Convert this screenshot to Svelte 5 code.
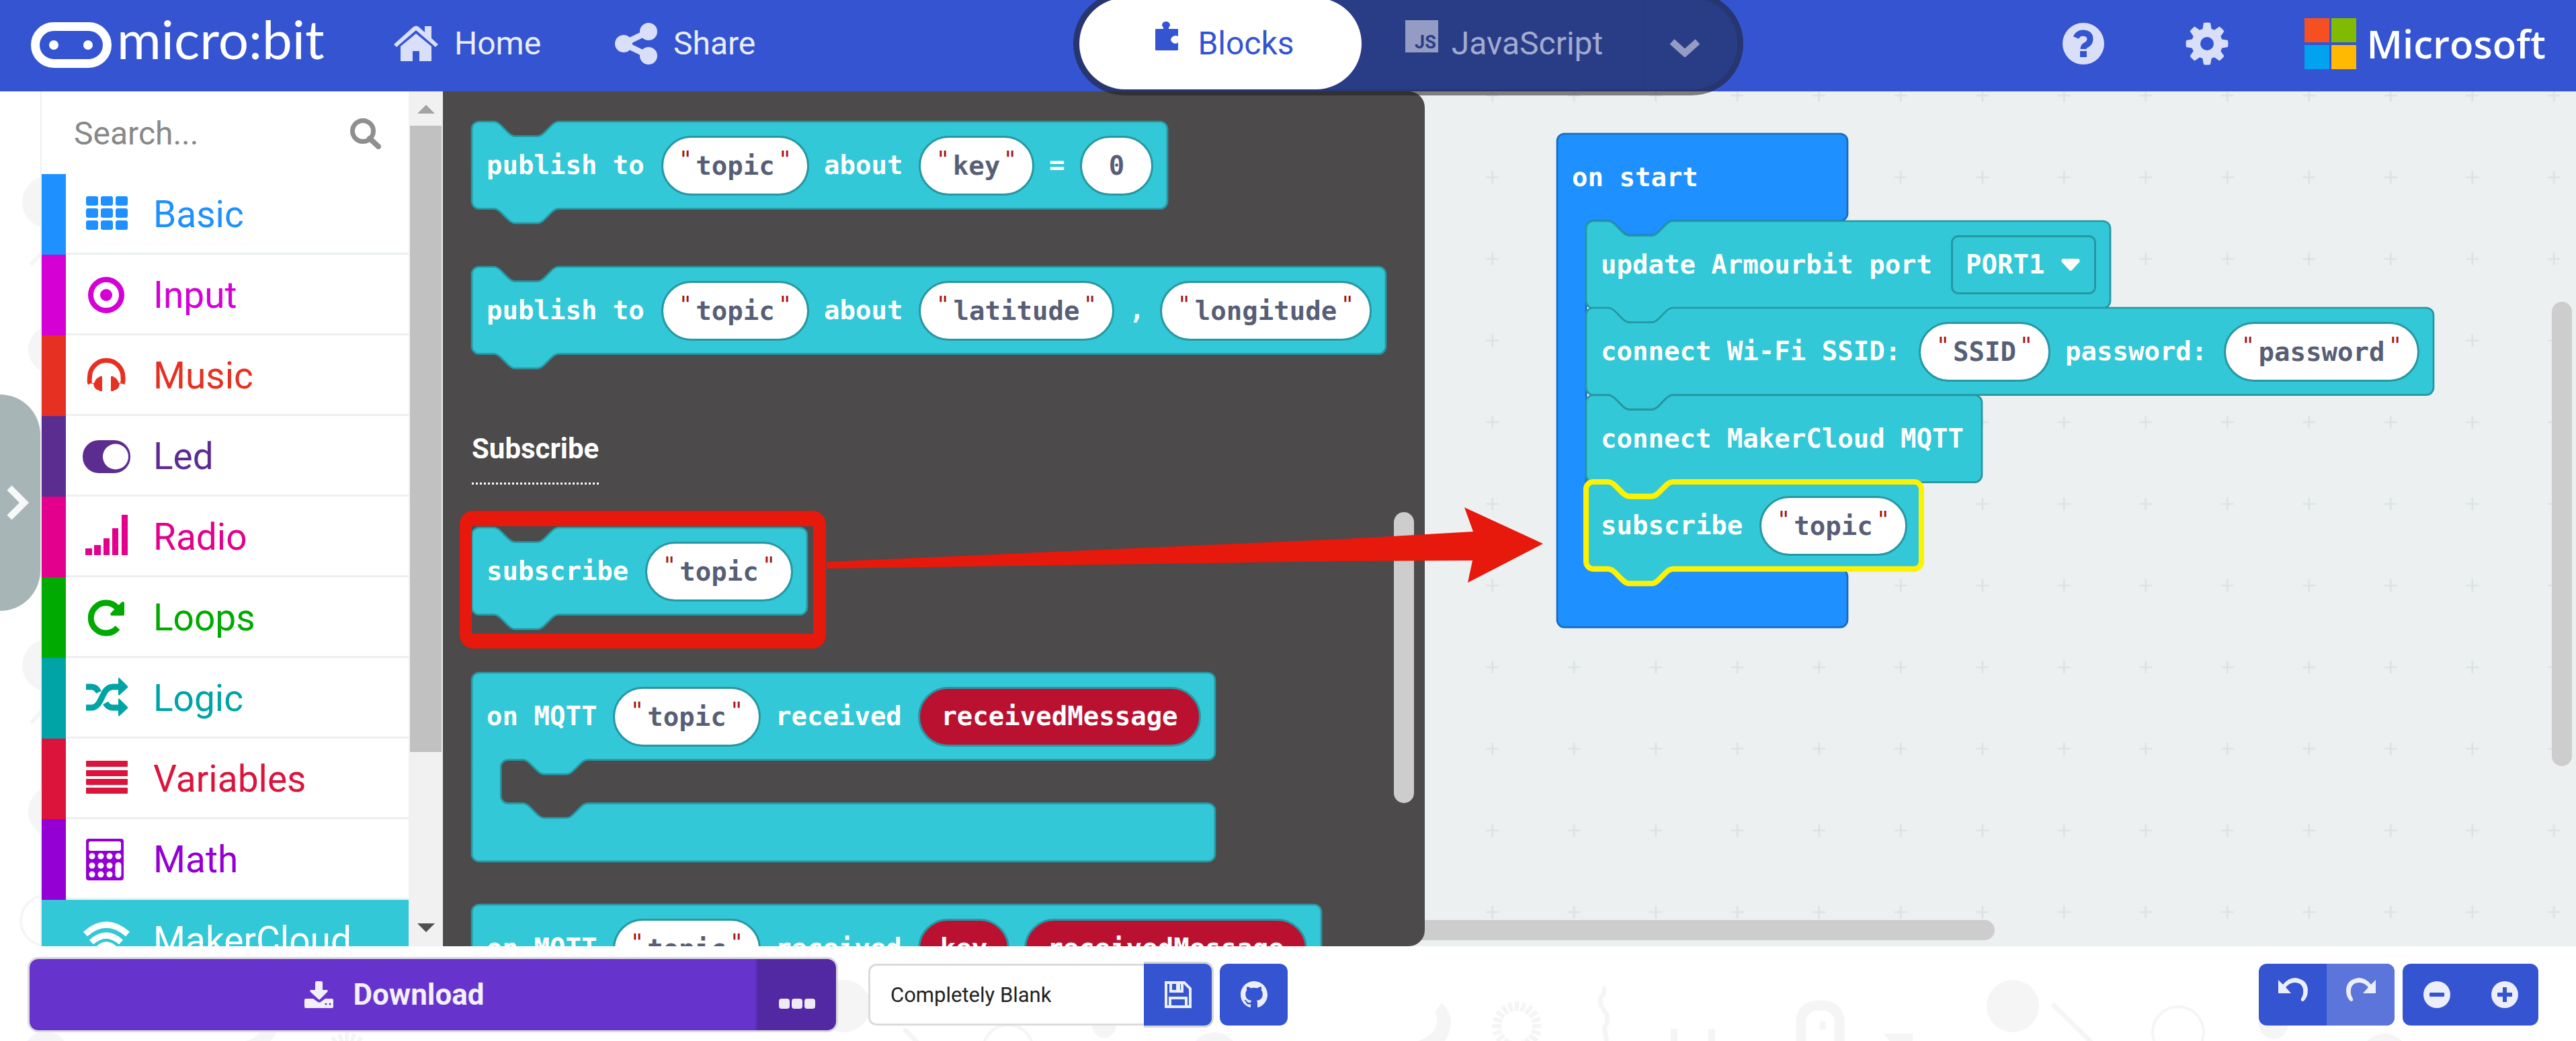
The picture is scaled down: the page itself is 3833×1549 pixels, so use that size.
<script>
  const CH = 23.75;
  const U = 2.7;

  const partWidth = (p) => {
    const n = p.v.length * CH;
    if (p.k === 'text') return Math.round(n);
    if (p.k === 'str') return Math.round(n + 101);
    if (p.k === 'var') return Math.round(n + 65);
    if (p.k === 'num') return 109;
    return Math.round(n + 97);
  };
  const rowWidth = (parts) => parts.reduce((w, p) => w + partWidth(p) + 22, 21);

  const NOTCH = 'c2,0 3,1 4,2 l4,4 c1,1 2,2 4,2 h12 c2,0 3,-1 4,-2 l4,-4 c1,-1 2,-2 4,-2';
  const NOTCH_BACK = 'c-2,0 -3,1 -4,2 l-4,4 c-1,1 -2,2 -4,2 h-12 c-2,0 -3,-1 -4,-2 l-4,-4 c-1,-1 -2,-2 -4,-2';

  function shape(kind, px, inner = 24) {
    const w = px / U;
    if (kind === 'stmt') {
      return `M0,4 a4,4 0 0 1 4,-4 h8 ${NOTCH} H${w - 4} a4,4 0 0 1 4,4 v40 a4,4 0 0 1 -4,4 H48 ${NOTCH_BACK} H4 a4,4 0 0 1 -4,-4 z`;
    }
    const b = 48 + inner;
    return `M0,4 a4,4 0 0 1 4,-4 H${w - 4} a4,4 0 0 1 4,4 v40 a4,4 0 0 1 -4,4 H64 ${NOTCH_BACK} H20 a4,4 0 0 0 -4,4 V${b - 4} a4,4 0 0 0 4,4 h8 ${NOTCH} H${w - 4} a4,4 0 0 1 4,4 v24 a4,4 0 0 1 -4,4 H4 a4,4 0 0 1 -4,-4 z`;
  }

  const T = (v) => ({ k: 'text', v });
  const S = (v) => ({ k: 'str', v });
  const V = (v) => ({ k: 'var', v });

  const publish = [
    { kind: 'stmt', parts: [T('publish to'), S('topic'), T('about'), S('key'), T('='), { k: 'num', v: '0' }] },
    { kind: 'stmt', parts: [T('publish to'), S('topic'), T('about'), S('latitude'), T(','), S('longitude')] }
  ];
  const subscribe = [
    { kind: 'stmt', marked: true, parts: [T('subscribe'), S('topic')] },
    { kind: 'event', parts: [T('on MQTT'), S('topic'), T('received'), V('receivedMessage')] },
    { kind: 'event', parts: [T('on MQTT'), S('topic'), T('received'), V('key'), V('receivedMessage')] }
  ];
  const placed = [
    { kind: 'event', tone: 'blue', x: 1658, y: 63, inner: 192, width: 432, parts: [T('on start')] },
    { kind: 'stmt', x: 1701, y: 193, parts: [T('update Armourbit port'), { k: 'menu', v: 'PORT1' }] },
    { kind: 'stmt', x: 1701, y: 322, parts: [T('connect Wi-Fi SSID:'), S('SSID'), T('password:'), S('password')] },
    { kind: 'stmt', x: 1701, y: 452, parts: [T('connect MakerCloud MQTT')] },
    { kind: 'stmt', tone: 'picked', x: 1701, y: 581, parts: [T('subscribe'), S('topic')] }
  ];

  const categories = [
    { id: 'basic', name: 'Basic' },
    { id: 'input', name: 'Input' },
    { id: 'music', name: 'Music' },
    { id: 'led', name: 'Led' },
    { id: 'radio', name: 'Radio' },
    { id: 'loops', name: 'Loops' },
    { id: 'logic', name: 'Logic' },
    { id: 'variables', name: 'Variables' },
    { id: 'math', name: 'Math' },
    { id: 'maker', name: 'MakerCloud' }
  ];
  const rays = Array.from({ length: 20 }, (_, i) => i * 18);
</script>

{#snippet categoryIcon(id)}
  <svg class="cat-icon" viewBox="0 0 64 64" aria-hidden="true">
    {#if id === 'basic'}
      {#each [6, 24, 42] as y}
        {#each [2, 24, 46] as x}
          <rect {x} {y} width="18" height="14" rx="3" />
        {/each}
      {/each}
    {:else if id === 'input'}
      <circle cx="32" cy="33" r="23" fill="none" stroke="currentColor" stroke-width="8" />
      <circle cx="32" cy="33" r="9" />
    {:else if id === 'music'}
      <path d="M8 45 C6 41 7.500 38 7.500 35 A24.500 24.500 0 0 1 57 35 C57 38 58 41 56 45" fill="none" stroke="currentColor" stroke-width="7" />
      <path d="M5 45 l9 -1 q3 -8 8 -9 v-1 h4 v22 h-4 v-1 q-8 -1 -9 -10 z M60 45 l-9 -1 q-3 -8 -8 -9 v-1 h-4 v22 h4 v-1 q8 -1 9 -10 z" />
    {:else if id === 'led'}
      <rect x="-3" y="9" width="71" height="49" rx="24" />
      <circle cx="46" cy="33.500" r="19" fill="#fff" />
    {:else if id === 'radio'}
      <path d="M1 50h10v10H1z M14 45h10v15H14z M28 35h9v25h-9z M41 20h9v40h-9z M55 0h9v60h-9z" />
    {:else if id === 'loops'}
      <path d="M49 48 A22.500 22.500 0 1 1 48 18" fill="none" stroke="currentColor" stroke-width="9" />
      <path d="M59 11 v17 q0 2 -2 2 h-17 q-3 -1 -1 -4 l16 -16 q3 -2 4 1 z" />
    {:else if id === 'logic'}
      <path d="M2 16 h8 q7 0 11 8 M2 47 h8 q8 0 13 -10 l6 -12 q5 -9 13 -9 h10 M31 40 q4 7 11 7 h10" fill="none" stroke="currentColor" stroke-width="9" />
      <path d="M50 3 q1 -1 2 0 l12 12 v2 l-12 11 q-1 1 -2 0 z M50 34 q1 -1 2 0 l12 12 v2 l-12 11 q-1 1 -2 0 z" />
    {:else if id === 'variables'}
      <path d="M3 6h60q1 0 1 1v7q0 1-1 1H3q-1 0-1-1V7q0-1 1-1z M3 20h60q1 0 1 1v7q0 1-1 1H3q-1 0-1-1v-7q0-1 1-1z M3 33h60q1 0 1 1v7q0 1-1 1H3q-1 0-1-1v-7q0-1 1-1z M3 46h60q1 0 1 1v7q0 1-1 1H3q-1 0-1-1v-7q0-1 1-1z" />
    {:else if id === 'math'}
      <rect x="2" y="2" width="56" height="62" rx="4" />
      <g fill="#fff">
        <rect x="6" y="6" width="48" height="14" rx="3" />
        {#each [28, 42, 55] as cy}
          {#each [11, 24, 37] as cx}
            <circle {cx} {cy} r="4.500" />
          {/each}
        {/each}
        <circle cx="50" cy="28" r="4.500" />
        <rect x="45.500" y="37" width="9" height="23" rx="4.500" />
      </g>
    {:else}
      <g fill="none" stroke="currentColor" stroke-width="9">
        <path d="M1 24 Q32 -4 64 24" />
        <path d="M10 36 Q32 16 54 36" />
        <path d="M20 46 Q32 34 45 46" />
      </g>
    {/if}
  </svg>
{/snippet}

{#snippet block(b)}
  {@const w = b.width ?? rowWidth(b.parts)}
  <svg class="shape {b.tone ?? ''}" aria-hidden="true">
    <g transform="scale({U})"><path d={shape(b.kind, w, b.inner)} /></g>
  </svg>
  <div class="row">
    {#each b.parts as p}
      {#if p.k === 'text'}
        <span class="label" style="width:{partWidth(p)}px">{p.v}</span>
      {:else if p.k === 'str'}
        <label class="pill" style="width:{partWidth(p)}px">
          <span class="quote">"</span>
          <input value={p.v} aria-label={p.v} />
          <span class="quote">"</span>
        </label>
      {:else if p.k === 'num'}
        <label class="pill num" style="width:{partWidth(p)}px"><input value={p.v} aria-label="value" /></label>
      {:else if p.k === 'var'}
        <span class="pill var" style="width:{partWidth(p)}px">{p.v}</span>
      {:else}
        <label class="menu" style="width:{partWidth(p)}px">
          <select aria-label="Armourbit port"><option>{p.v}</option></select>
          <svg viewBox="0 0 30 20" aria-hidden="true"><path d="M4 1 H26 Q30 2 28 6 L17 18 Q15 20 13 18 L2 6 Q0 2 4 1z" fill="#fff" /></svg>
        </label>
      {/if}
    {/each}
  </div>
{/snippet}

<div class="app">
  <header>
    <a class="brand" href="#home" aria-label="micro:bit">
      <svg viewBox="0 0 120 68" aria-hidden="true">
        <rect x="6.500" y="6.500" width="107" height="55" rx="27.500" fill="none" stroke="#fff" stroke-width="13" />
        <circle cx="34" cy="34" r="7" fill="#fff" /><circle cx="85" cy="34" r="7" fill="#fff" />
      </svg>
      <span>micro:bit</span>
    </a>
    <a class="nav home" href="#projects">
      <svg viewBox="0 0 66 54" aria-hidden="true">
        <path d="M0 28 L29 2 Q33 -1 37 2 L46 10 V1 H56 V19 L66 28 L62 32 L33 7 L4 32z" />
        <path d="M10 31 L33 12 L56 31 V53 H38 V38 H28 V53 H10z" />
      </svg>
      Home
    </a>
    <a class="nav share" href="#share">
      <svg viewBox="0 0 64 64" aria-hidden="true">
        <circle cx="13" cy="32" r="13" /><circle cx="50" cy="14" r="13" /><circle cx="50" cy="50" r="13" />
        <path d="M50 14 L13 32 L50 50" fill="none" stroke="currentColor" stroke-width="9" />
      </svg>
      Share
    </a>
    <div class="toggle">
      <button class="mode on">
        <svg class="puzzle" viewBox="0 0 36 44" aria-hidden="true">
          <path d="M3 11 H13 V9 Q11 7 11 5 Q12 0 17 0 Q22 0 23 5 Q23 7 21 9 V11 H34 Q35 11 35 12 V22 Q33 21 31 21 Q25 22 24 27 Q25 32 31 33 Q33 33 35 31 V42 Q35 43 34 43 H2 Q1 43 1 42 V12 Q1 11 3 11z" />
        </svg>
        Blocks
      </button>
      <button class="mode js">
        <span class="js-badge">JS</span>
        JavaScript
      </button>
      <button class="mode more" aria-label="Languages">
        <svg viewBox="0 0 46 28" aria-hidden="true"><path d="M4 5 L23 22 L42 5" fill="none" stroke="currentColor" stroke-width="10" /></svg>
      </button>
    </div>
    <div class="tools">
      <button class="tool" aria-label="Help">
        <svg viewBox="0 0 62 62" aria-hidden="true">
          <circle cx="31" cy="31" r="31" />
          <path d="M20 22 Q23 15 31 15 Q41 16 41 24 Q41 30 35 33 Q31 35 31 39" fill="none" stroke="#3454d1" stroke-width="9" />
          <rect x="26" y="42" width="10" height="9" fill="#3454d1" />
        </svg>
      </button>
      <button class="tool gear" aria-label="Settings">
        <svg viewBox="0 0 64 64" aria-hidden="true">
          <g>
            {#each [0, 45, 90, 135, 180, 225, 270, 315] as a}
              <path d="M25 12 L27 1 Q32 0 37 1 L39 12z" transform="rotate({a} 32 32)" />
            {/each}
          </g>
          <circle cx="32" cy="32" r="16.500" fill="none" stroke="currentColor" stroke-width="13" />
        </svg>
      </button>
      <a class="ms" href="#microsoft">
        <svg viewBox="0 0 77 77" aria-hidden="true">
          <rect width="37" height="36" fill="#f65022" /><rect x="40" width="37" height="36" fill="#80bb02" />
          <rect y="40" width="37" height="36" fill="#02a3ee" /><rect x="40" y="40" width="37" height="36" fill="#ffb903" />
        </svg>
        Microsoft
      </a>
    </div>
  </header>

  <main>
    <aside>
      <svg class="doodle" viewBox="0 0 60 1272" aria-hidden="true">
        <g fill="#f5f5f5"><circle cx="72" cy="165" r="39" /><circle cx="78" cy="384" r="36" /><circle cx="72" cy="854" r="39" /><circle cx="81" cy="1072" r="39" /></g>
        <g fill="none" stroke="#f5f5f5" stroke-width="4"><path d="M46 258 L62 240 M46 940 L62 922" stroke-width="6" /><circle cx="68" cy="1234" r="37" /></g>
      </svg>
      <button class="expand" aria-label="Show simulator">
        <svg viewBox="0 0 34 52" aria-hidden="true"><path d="M4 4 L26 26 L4 48" fill="none" stroke="#f7f9f9" stroke-width="10" /></svg>
      </button>
    </aside>

    <nav class="toolbox">
      <div class="list">
        <div class="search">
          <input type="text" placeholder="Search..." aria-label="Search" />
          <svg viewBox="0 0 46 46" aria-hidden="true"><circle cx="19" cy="19" r="15.500" fill="none" stroke="#8f8f8f" stroke-width="7" /><path d="M29 30 L42 42" stroke="#8f8f8f" stroke-width="8" stroke-linecap="round" /></svg>
        </div>
        {#each categories as c}
          <button class="cat {c.id}">{@render categoryIcon(c.id)}<span>{c.name}</span></button>
        {/each}
      </div>
      <div class="bar" aria-hidden="true">
        <svg viewBox="0 0 26 14"><path d="M0 13 L13 0 L26 13z" fill="#a3a3a3" /></svg>
        <div class="thumb"></div>
        <svg viewBox="0 0 26 14"><path d="M0 0 L13 13 L26 0z" fill="#505050" /></svg>
      </div>
    </nav>

    <section class="workspace">
      <svg class="grid" aria-hidden="true">
        <defs>
          <pattern id="cross" width="45" height="45" patternUnits="userSpaceOnUse" patternTransform="translate(43 67) scale({U})">
            <path d="M22.500 19 v7 M19 22.500 h7" stroke="#dce1e2" stroke-width="1" />
          </pattern>
        </defs>
        <rect width="100%" height="100%" fill="url(#cross)" />
      </svg>
      <div class="scroll-x"></div>
      <div class="scroll-y"></div>
      {#each placed as b}
        <div class="block placed" style="left:{b.x}px;top:{b.y}px;width:{b.width ?? rowWidth(b.parts)}px">
          {@render block(b)}
        </div>
      {/each}

      <div class="flyout">
        {#each publish as b}
          <div class="block {b.kind}" style="width:{rowWidth(b.parts)}px">{@render block(b)}</div>
        {/each}
        <h2>Subscribe</h2>
        {#each subscribe as b}
          <div class="block {b.kind}" style="width:{rowWidth(b.parts)}px">
            {@render block(b)}
            {#if b.marked}<div class="mark"></div>{/if}
          </div>
        {/each}
        <div class="fly-scroll"></div>
      </div>

      <svg class="arrow" viewBox="0 0 1066 114" aria-hidden="true">
        <path d="M0 82 L770 48 L962 37 L949 1 L1066 55 L954 113 L961 80 L770 81 L0 92z" fill="#e6190c" />
      </svg>
    </section>
  </main>

  <footer>
    <svg class="doodle" viewBox="0 0 3833 141" preserveAspectRatio="xMinYMin slice" aria-hidden="true">
      <g fill="#f5f5f5">
        <circle cx="68" cy="158" r="32" /><path d="M366 141 Q385 136 392 120 H416 Q410 132 402 141z" />
        <circle cx="1256" cy="89" r="39" /><circle cx="1643" cy="118" r="18" /><circle cx="1807" cy="164" r="36" />
        <path d="M2145 84 Q2170 108 2150 141 H2110 Q2146 128 2136 98z" />
        <circle cx="2995" cy="89" r="39" /><path d="M2802 130 H2846 V141 H2812z" />
        <circle cx="3383" cy="116" r="22" /><circle cx="3548" cy="166" r="36" />
      </g>
      <g fill="none" stroke="#f5f5f5" stroke-width="4">
        <path d="M1345 123 L1368 146 M3054 86 L3112 143" stroke-width="7" />
        <circle cx="1500" cy="154" r="37" /><circle cx="3241" cy="128" r="38" />
        <path d="M2387 60 v10 q-12 10 0 26 q10 12 0 26 l4 19" stroke-width="7" />
        <path d="M2491 123 v20 M2547 123 v20" stroke-width="10" />
        <path d="M2680 143 V108 Q2684 88 2708 88 Q2733 88 2737 108 V143" stroke-width="15" />
        <path d="M2712 112 V124" stroke-width="9" />
        {#each rays as a}
          <path d="M2257 82 v14" stroke-width="6" transform="rotate({a} 2257 119)" />
          <path d="M516 128 v14" stroke-width="6" transform="rotate({a} 516 165)" />
        {/each}
      </g>
    </svg>
    <div class="download">
      <button class="dl-main">
        <svg viewBox="0 0 44 40" aria-hidden="true">
          <path d="M18 0 h7 q2 0 2 2 v11 h6 q3 0 1 3 L23 27 q-1 1 -2 0 L9 16 q-2 -3 1 -3 h6 V2 q0 -2 2 -2z" />
          <path d="M2 26 H13 L20 31 Q22 32 24 31 L31 26 H41 Q43 26 43 28 V38 Q43 40 41 40 H2 Q0 40 0 38 V28 Q0 26 2 26z" />
          <circle cx="32" cy="34" r="1.500" fill="#6633cc" /><circle cx="38" cy="34" r="1.500" fill="#6633cc" />
        </svg>
        Download
      </button>
      <button class="dl-more" aria-label="More download options"><i></i><i></i><i></i></button>
    </div>
    <div class="project">
      <input value="Completely Blank" aria-label="Project name" />
      <button class="save" aria-label="Save">
        <svg viewBox="0 0 40 40" aria-hidden="true">
          <path d="M2 2 H29 L38 11 V38 H2z M8 38 V25 H32 V38 M9 2 V15 H26 V2" fill="none" stroke="currentColor" stroke-width="4" />
          <rect x="17" y="4" width="6" height="9" />
        </svg>
      </button>
    </div>
    <button class="github" aria-label="GitHub">
      <svg viewBox="0 0 16 16" aria-hidden="true"><path d="M8 0C3.58 0 0 3.58 0 8c0 3.54 2.29 6.53 5.47 7.59.4.07.55-.17.55-.38 0-.19-.01-.82-.01-1.49-2.01.37-2.53-.49-2.69-.94-.09-.23-.48-.94-.82-1.13-.28-.15-.68-.52-.01-.53.63-.01 1.08.58 1.23.82.72 1.21 1.87.87 2.33.66.07-.52.28-.87.51-1.07-1.78-.2-3.64-.89-3.64-3.95 0-.87.31-1.59.82-2.15-.08-.2-.36-1.02.08-2.12 0 0 .67-.21 2.2.82.64-.18 1.32-.27 2-.27s1.36.09 2 .27c1.53-1.04 2.2-.82 2.2-.82.44 1.1.16 1.92.08 2.12.51.56.82 1.27.82 2.15 0 3.07-1.87 3.75-3.65 3.95.29.25.54.73.54 1.48 0 1.07-.01 1.93-.01 2.2 0 .21.15.46.55.38A8.01 8.01 0 0 0 16 8c0-4.42-3.58-8-8-8z" /></svg>
    </button>
    <div class="pair history">
      <button aria-label="Undo">
        <svg viewBox="0 0 46 36" aria-hidden="true"><path d="M1 3 L8 10 Q16 0 26 0 Q44 2 45 18 Q45 30 38 35 Q34 35 35 31 Q39 25 38 17 Q36 7 26 7 Q18 7 12 14 L20 23 H1z" /></svg>
      </button>
      <button class="redo" aria-label="Redo">
        <svg viewBox="0 0 46 36" aria-hidden="true"><path transform="translate(46 0) scale(-1 1)" d="M1 3 L8 10 Q16 0 26 0 Q44 2 45 18 Q45 30 38 35 Q34 35 35 31 Q39 25 38 17 Q36 7 26 7 Q18 7 12 14 L20 23 H1z" /></svg>
      </button>
    </div>
    <div class="pair">
      <button aria-label="Zoom out">
        <svg viewBox="0 0 40 40" aria-hidden="true"><circle cx="20" cy="20" r="20" /><rect x="9" y="17" width="22" height="6" rx="1" fill="#3454d1" /></svg>
      </button>
      <button aria-label="Zoom in">
        <svg viewBox="0 0 40 40" aria-hidden="true"><circle cx="20" cy="20" r="20" /><path d="M9 17h8V9h6v8h8v6h-8v8h-6v-8H9z" fill="#3454d1" /></svg>
      </button>
    </div>
  </footer>
</div>

<style>
  :global(body) { margin: 0; background: #fff; overflow: hidden; }
  .app { display: flex; flex-direction: column; height: 100vh; font-family: Roboto, sans-serif; color: #fff; }
  .app * { box-sizing: border-box; }
  button, input, select { font: inherit; color: inherit; border: 0; padding: 0; margin: 0; background: none; outline: 0; }
  button { display: flex; align-items: center; cursor: pointer; }
  a { color: inherit; text-decoration: none; display: flex; align-items: center; }
  svg { fill: currentColor; flex: none; }

  header { position: relative; z-index: 3; flex: none; height: 136px; background: #3454d1; display: flex; align-items: center; padding: 0 45px 6px 46px; font-size: 48px; line-height: 56px; }
  .brand { width: 540px; gap: 8px; padding-top: 4px; }
  .brand svg { width: 120px; height: 68px; }
  .brand span { font: 80px/80px Lato, sans-serif; padding-bottom: 20px; }
  .nav svg { color: #d9dff8; }
  .nav { color: #eaedfb; }
  .home { width: 329px; gap: 24px; }
  .home svg { width: 66px; height: 54px; }
  .share { width: 682px; gap: 23px; }
  .share svg { width: 64px; height: 64px; }
  .toggle { align-self: flex-start; flex: none; margin-top: -12px; height: 154px; border: 9px solid rgb(29 29 29 / 53%); border-radius: 77px; display: flex; background: #293d87; background-clip: padding-box; }
  .mode { height: 136px; justify-content: center; color: #a3abcf; }
  .on { width: 420px; padding-left: 12px; background: #fff; color: #3454d1; border-radius: 68px; gap: 28px; }
  .puzzle { width: 36px; height: 44px; margin-bottom: 22px; }
  .js { width: 419px; padding-left: 5px; gap: 20px; }
  .js-badge { width: 49px; height: 48px; margin-bottom: 22px; background: #949cc3; color: #293d87; font: bold 27px/28px Roboto, sans-serif; padding: 19px 3px 0 0; text-align: right; }
  .more { width: 140px; border-left: 3px solid #283b82; padding: 12px 20px 0 0; color: #949cc3; }
  .more svg { width: 46px; height: 28px; }
  .tools { margin-left: auto; display: flex; align-items: center; }
  .tool { color: #d9dff8; margin-right: 121px; }
  .tool svg { width: 62px; height: 62px; }
  .gear { margin-right: 113px; }
  .gear svg { width: 64px; height: 64px; }
  .ms { font: 600 58px/60px "Open Sans", sans-serif; gap: 16px; }
  .ms svg { width: 77px; height: 77px; }

  main { flex: 1; min-height: 0; display: flex; }
  aside { position: relative; width: 60px; flex: none; display: flex; align-items: center; padding-bottom: 48px; }
  aside .doodle { position: absolute; left: 0; top: 0; width: 60px; height: 1272px; }
  .expand { position: relative; width: 60px; height: 322px; padding-left: 10px; background: #a8b5b7; border-radius: 0 60px 60px 0; }
  .expand svg { width: 34px; height: 52px; }

  .toolbox { width: 599px; flex: none; display: flex; border-left: 2px solid #ecf0f1; overflow: hidden; }
  .list { flex: 1; display: flex; flex-direction: column; background: #fff; }
  .search { flex: none; height: 123px; display: flex; align-items: center; justify-content: space-between; padding: 2px 41px 0 48px; font-size: 48px; color: #888; }
  .search input { width: 340px; height: 72px; }
  .search input::placeholder { color: #888; opacity: 1; }
  .search svg { width: 46px; height: 46px; }
  .cat { flex: none; height: 120px; border-left: 36px solid; padding-left: 28px; gap: 38px; font-size: 55px; position: relative; text-align: left; box-shadow: inset 0 -3px #ecf0f1; padding-bottom: 3px; }
  .cat span { padding-top: 3px; }
  .cat-icon { width: 64px; height: 64px; overflow: visible; }
  .basic { color: #1e90ff; } .input { color: #d400d4; } .music { color: #e63022; } .led { color: #5c2d91; }
  .radio { color: #e3008c; } .loops { color: #00aa00; } .logic { color: #00a4a6; } .variables { color: #dc143c; }
  .math { color: #9400d3; }
  .maker { color: #fff; background: #32c8d7; border-left-color: #32c8d7; box-shadow: none; }
  .bar { width: 51px; background: #f1f1f1; display: flex; flex-direction: column; align-items: center; padding: 20px 0; }
  .bar svg { width: 26px; height: 14px; }
  .thumb { width: 47px; height: 932px; background: #c1c1c1; margin: 17px 0 auto; flex: none; }

  .workspace { flex: 1; position: relative; background: #ecf0f1; min-width: 0; }
  .grid { position: absolute; inset: 0; width: 100%; height: 100%; }
  .scroll-x { position: absolute; left: 0; bottom: 9px; width: 2309px; height: 30px; border-radius: 15px; background: #cdcdcd; }
  .scroll-y { position: absolute; right: 6px; top: 313px; width: 30px; height: 691px; border-radius: 15px; background: #cdcdcd; }
  .flyout { position: absolute; left: 0; top: 0; bottom: 0; width: 1461px; background: #4c4a4a; border-radius: 0 24px 24px 0; overflow: hidden; padding: 45px 0 0 43px; display: flex; flex-direction: column; align-items: flex-start; gap: 64px; }
  .fly-scroll { position: absolute; right: 16px; top: 626px; width: 30px; height: 433px; border-radius: 15px; background: #cdcdcd; }
  h2 { margin: 0; height: 108px; flex: none; font-size: 42px; line-height: 52px; font-weight: 700; padding-top: 29px; border-bottom: 3px dotted #fff; }

  .block { position: relative; flex: none; height: 152px; font: bold 39px/46px "DejaVu Sans Mono", monospace; white-space: nowrap; }
  .block.event { height: 281px; }
  .block.placed { position: absolute; height: 130px; }
  .shape { position: absolute; left: 0; top: 0; width: 100%; height: 100%; overflow: visible; fill: #32c8d7; stroke: #2797a2; stroke-width: 1; }
  .shape.blue { fill: #1e90ff; stroke: #1a6bbf; }
  .shape.picked { stroke: #fff200; stroke-width: 3; }
  .row { position: relative; height: 130px; display: flex; align-items: center; gap: 22px; padding-left: 22px; }
  .label { flex: none; }
  .pill { flex: none; height: 89px; border: 3px solid #2797a2; border-radius: 45px; background: #fff; color: #575e75; display: flex; align-items: center; justify-content: center; }
  .pill input { flex: 1; min-width: 0; width: 0; height: 50px; text-align: center; }
  .quote { flex: none; width: 28px; font-weight: 400; font-size: 34px; color: #a31515; text-align: center; padding-bottom: 18px; }
  .pill .quote:first-child { margin-left: 19px; }
  .pill .quote:last-child { margin-right: 19px; }
  .var { background: #ba1131; color: #fff; }
  .menu { flex: none; height: 88px; border: 3px solid #2797a2; border-radius: 11px; display: flex; align-items: center; justify-content: space-between; padding: 0 20px 0 19px; }
  .menu select { appearance: none; width: 122px; height: 50px; }
  .menu svg { width: 30px; height: 20px; }
  .mark { position: absolute; left: -18px; top: -25px; width: calc(100% + 46px); height: 205px; border: solid #e6190c; border-width: 23px 19px 22px 18px; border-radius: 20px; }
  .arrow { position: absolute; left: 571px; top: 618px; width: 1066px; height: 114px; }

  footer { position: relative; flex: none; height: 141px; background: #fff; display: flex; align-items: center; padding: 0 56px 0 41px; }
  footer .doodle { position: absolute; inset: 0; width: 100%; height: 141px; }
  footer > :not(.doodle) { position: relative; margin-top: 3px; }
  footer button { color: #eceefb; justify-content: center; }
  .download { display: flex; height: 112px; width: 1206px; border: 3px solid #dbdbdb; border-radius: 16px; overflow: hidden; }
  .dl-main { flex: 1; background: #6633cc; gap: 28px; font-size: 44px; font-weight: 700; padding-left: 6px; }
  .dl-main svg { width: 44px; height: 40px; }
  footer .dl-main { color: #f3effb; }
  .dl-more { width: 120px; background: #5329a3; gap: 3px; padding-top: 26px; border-left: 3px solid #5c2eb7; }
  .dl-more i { width: 16px; height: 15px; border-radius: 4px; background: #eeeaf6; }
  .project { display: flex; align-items: center; margin-left: 45px; }
  .project input { width: 410px; height: 92px; border: 3px solid #dbdbdb; border-right: 0; border-radius: 12px 0 0 12px; background: #fff; color: #222; font-size: 31px; padding-left: 30px; }
  .save, .github { background: #3454d1; }
  .save { width: 104px; height: 98px; border: 3px solid #d6d6d6; border-left: 0; border-radius: 0 14px 14px 0; }
  .save svg, .github svg { width: 40px; height: 40px; }
  .github { width: 101px; height: 92px; border-radius: 12px; margin-left: 9px; }
  .pair { display: flex; border-radius: 12px; overflow: hidden; background: #3454d1; }
  .pair button { width: 101px; height: 92px; }
  .pair svg { width: 40px; height: 40px; }
  .history { margin-left: auto; margin-right: 12px; }
  .history button { padding-bottom: 14px; }
  .pair.history svg { width: 46px; height: 36px; }
  .redo { background: #5c75da; }
</style>
